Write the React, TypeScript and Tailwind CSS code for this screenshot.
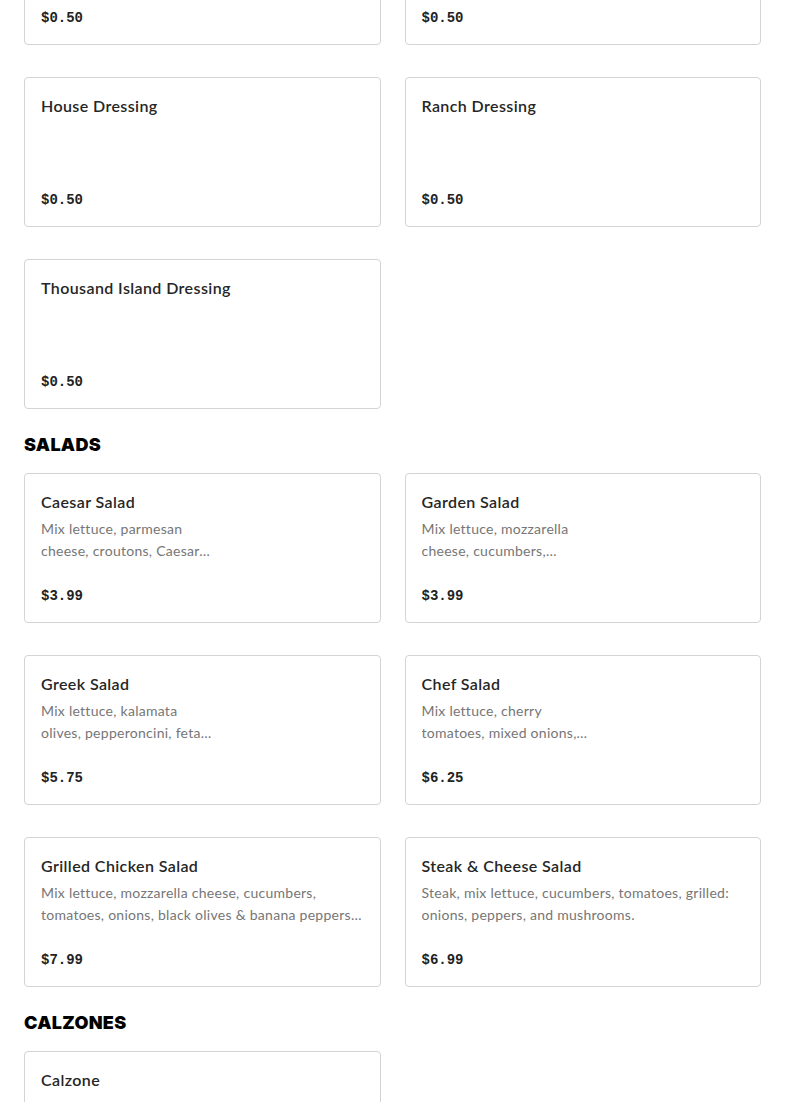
import * as React from "react"

type MenuItem = {
    name: string
    description?: string
    price: string
    narrow?: boolean
}

type MenuSection = {
    title?: string
    items: MenuItem[]
}

const sections: MenuSection[] = [
    {
        items: [
            { name: "Blue Cheese Dressing", price: "$0.50" },
            { name: "Caesar Dressing", price: "$0.50" },
            { name: "House Dressing", price: "$0.50" },
            { name: "Ranch Dressing", price: "$0.50" },
            { name: "Thousand Island Dressing", price: "$0.50" },
        ],
    },
    {
        title: "Salads",
        items: [
            { name: "Caesar Salad", description: "Mix lettuce, parmesan cheese, croutons, Caesar dressing.", price: "$3.99", narrow: true },
            { name: "Garden Salad", description: "Mix lettuce, mozzarella cheese, cucumbers, tomatoes, onions.", price: "$3.99", narrow: true },
            { name: "Greek Salad", description: "Mix lettuce, kalamata olives, pepperoncini, feta cheese, tomatoes.", price: "$5.75", narrow: true },
            { name: "Chef Salad", description: "Mix lettuce, cherry tomatoes, mixed onions, ham, turkey.", price: "$6.25", narrow: true },
            { name: "Grilled Chicken Salad", description: "Mix lettuce, mozzarella cheese, cucumbers, tomatoes, onions, black olives & banana peppers, grilled chicken.", price: "$7.99" },
            { name: "Steak & Cheese Salad", description: "Steak, mix lettuce, cucumbers, tomatoes, grilled: onions, peppers, and mushrooms.", price: "$6.99" },
        ],
    },
    {
        title: "Calzones",
        items: [
            { name: "Calzone", description: "Stuffed with ricotta and mozzarella cheese, served with a side of marinara sauce.", price: "$8.99" },
        ],
    },
]

function ItemCard({ item }: { item: MenuItem }) {
    return (
        <div className="h-[150px] rounded-[4px] border border-[#d4d4d4] bg-white p-4 flex flex-col">
            <h3 className="text-[16px] leading-6 font-semibold text-[#262626] tracking-[0.4px]">
                {item.name}
            </h3>
            {item.description && (
                <p
                    className={`mt-1 text-[14px] leading-[22px] text-[#767676] line-clamp-2 tracking-[0.27px] ${item.narrow ? "max-w-[174px]" : ""}`}
                >
                    {item.description}
                </p>
            )}
            <p className="mt-auto text-[14px] leading-5 font-bold text-[#222] font-['Liberation_Mono',monospace]">
                {item.price}
            </p>
        </div>
    )
}

export default function App() {
    return (
        <div className="min-h-screen bg-white font-['Lato',sans-serif] overflow-hidden">
            <div className="px-6 mt-[-105px] flex flex-col gap-6">
                {sections.map((section, i) => (
                    <section key={i}>
                        {section.title && (
                            <h2 className="mb-4 text-[18px] leading-6 font-black uppercase text-black tracking-[0.3px] font-['Inter',sans-serif]">
                                {section.title}
                            </h2>
                        )}
                        <div className="grid grid-cols-2 gap-x-6 gap-y-8">
                            {section.items.map((item) => (
                                <ItemCard key={item.name} item={item} />
                            ))}
                        </div>
                    </section>
                ))}
            </div>
        </div>
    )
}
